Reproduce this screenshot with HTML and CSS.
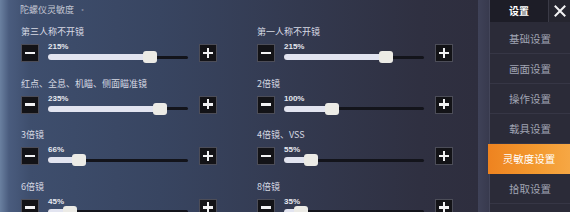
FILE: index.html
```html
<!DOCTYPE html>
<html lang="zh">
<head>
<meta charset="utf-8">
<link rel="stylesheet" href="styles.css">
</head>
<body>
<div class="screen">
  <main class="panel">
    <div class="title">陀螺仪灵敏度 <span class="dot">·</span></div>
    <div class="grid">
      <div class="setting">
        <div class="label">第三人称不开镜</div>
        <div class="controls">
          <div class="btn minus"></div>
          <div class="slider"><div class="pct">215%</div><div class="track"><div class="fill" style="width:73%"></div><div class="knob" style="left:73%"></div></div></div>
          <div class="btn plus"></div>
        </div>
      </div>
      <div class="setting">
        <div class="label">第一人称不开镜</div>
        <div class="controls">
          <div class="btn minus"></div>
          <div class="slider"><div class="pct">215%</div><div class="track"><div class="fill" style="width:73%"></div><div class="knob" style="left:73%"></div></div></div>
          <div class="btn plus"></div>
        </div>
      </div>
      <div class="setting">
        <div class="label">红点、全息、机瞄、侧面瞄准镜</div>
        <div class="controls">
          <div class="btn minus"></div>
          <div class="slider"><div class="pct">235%</div><div class="track"><div class="fill" style="width:80%"></div><div class="knob" style="left:80%"></div></div></div>
          <div class="btn plus"></div>
        </div>
      </div>
      <div class="setting">
        <div class="label">2倍镜</div>
        <div class="controls">
          <div class="btn minus"></div>
          <div class="slider"><div class="pct">100%</div><div class="track"><div class="fill" style="width:34%"></div><div class="knob" style="left:34%"></div></div></div>
          <div class="btn plus"></div>
        </div>
      </div>
      <div class="setting">
        <div class="label">3倍镜</div>
        <div class="controls">
          <div class="btn minus"></div>
          <div class="slider"><div class="pct">66%</div><div class="track"><div class="fill" style="width:22%"></div><div class="knob" style="left:22%"></div></div></div>
          <div class="btn plus"></div>
        </div>
      </div>
      <div class="setting">
        <div class="label">4倍镜、VSS</div>
        <div class="controls">
          <div class="btn minus"></div>
          <div class="slider"><div class="pct">55%</div><div class="track"><div class="fill" style="width:19%"></div><div class="knob" style="left:19%"></div></div></div>
          <div class="btn plus"></div>
        </div>
      </div>
      <div class="setting">
        <div class="label">6倍镜</div>
        <div class="controls">
          <div class="btn minus"></div>
          <div class="slider"><div class="pct">45%</div><div class="track"><div class="fill" style="width:16%"></div><div class="knob" style="left:16%"></div></div></div>
          <div class="btn plus"></div>
        </div>
      </div>
      <div class="setting">
        <div class="label">8倍镜</div>
        <div class="controls">
          <div class="btn minus"></div>
          <div class="slider"><div class="pct">35%</div><div class="track"><div class="fill" style="width:12%"></div><div class="knob" style="left:12%"></div></div></div>
          <div class="btn plus"></div>
        </div>
      </div>
    </div>
  </main>
  <div class="divider"></div>
  <aside class="sidebar">
    <div class="header">
      <div class="tab">设置</div>
      <div class="close"><svg width="12" height="12" viewBox="0 0 12 12"><path d="M1.5 1.5 L10.5 10.5 M10.5 1.5 L1.5 10.5" stroke="#f2f2f4" stroke-width="2" stroke-linecap="square"/></svg></div>
    </div>
    <nav class="menu">
      <div class="item">基础设置</div>
      <div class="item">画面设置</div>
      <div class="item">操作设置</div>
      <div class="item">载具设置</div>
      <div class="item active">灵敏度设置</div>
      <div class="item">拾取设置</div>
    </nav>
  </aside>
</div>
</body>
</html>
```
FILE: styles.css
```css
html, body {
  margin: 0;
  padding: 0;
}
body {
  width: 570px;
  height: 212px;
  overflow: hidden;
  font-family: "Noto Sans CJK SC", "Noto Sans", sans-serif;
  background: #2b2b38;
}
.screen {
  display: flex;
  height: 212px;
  overflow: hidden;
}
.panel {
  width: 478px;
  flex: none;
  box-sizing: border-box;
  padding: 4px 0 0 20px;
  background: linear-gradient(90deg, #6a80a0 0px, #4a5c7e 9px, #3e4e6d 30px, #384561 160px, #33394f 300px, #2f3041 420px, #2e2e3e 478px);
  overflow: hidden;
}
.title {
  font-size: 9px;
  line-height: 12px;
  color: #c3c7d3;
  margin-bottom: 10px;
}
.dot {
  color: #7d8498;
  margin-left: 2px;
}
.grid {
  display: grid;
  grid-template-columns: 196px 196px;
  column-gap: 40px;
  row-gap: 14.5px;
  padding-left: 1px;
}
.label {
  font-size: 9px;
  line-height: 12px;
  color: #d6d9e3;
  margin-bottom: 5px;
  white-space: nowrap;
}
.controls {
  display: flex;
  height: 20px;
}
.btn {
  width: 18px;
  height: 18px;
  flex: none;
  box-sizing: border-box;
  margin-top: 1px;
  background: #131317;
  border: 1px solid #4c4d58;
  position: relative;
}
.btn::before {
  content: "";
  position: absolute;
  left: 3px;
  top: 6.5px;
  width: 10px;
  height: 2.5px;
  background: #f2f2f4;
}
.plus::after {
  content: "";
  position: absolute;
  left: 6.75px;
  top: 2.75px;
  width: 2.5px;
  height: 10px;
  background: #f2f2f4;
}
.slider {
  width: 140px;
  flex: none;
  margin: 0 11px 0 9px;
}
.pct {
  font-family: "Liberation Sans", Arial, sans-serif;
  font-weight: bold;
  font-size: 8px;
  line-height: 8px;
  color: #e6e8ef;
}
.track {
  position: relative;
  height: 12px;
}
.track::before {
  content: "";
  position: absolute;
  left: 0;
  right: 0;
  top: 4.5px;
  height: 3px;
  background: #13141b;
  border-radius: 1.5px;
}
.fill {
  position: absolute;
  left: 0;
  top: 3px;
  height: 6px;
  background: #e2e4f0;
  border-radius: 3px 0 0 3px;
}
.knob {
  position: absolute;
  top: 0;
  width: 14px;
  height: 12px;
  margin-left: -7px;
  background: #ecebe6;
  border-radius: 3px;
}
.divider {
  width: 12px;
  flex: none;
  background: linear-gradient(90deg, #3f4258, #383a4e);
  border-right: 1px solid #44465a;
  box-sizing: border-box;
}
.sidebar {
  width: 80px;
  flex: none;
  background: #2b2b38;
}
.header {
  display: flex;
  height: 22px;
}
.tab {
  flex: 1;
  background: #1d1d27;
  color: #ffffff;
  font-size: 10px;
  font-weight: bold;
  line-height: 22px;
  text-align: center;
}
.close {
  width: 22px;
  flex: none;
  background: #25252f;
  border-left: 1px solid #3a3a46;
  box-sizing: border-box;
  display: flex;
  align-items: center;
  justify-content: center;
}
.menu {
  padding-top: 2px;
}
.item {
  height: 30px;
  line-height: 30px;
  box-sizing: border-box;
  border-bottom: 1px solid #363645;
  font-size: 10.5px;
  color: #a0a4b3;
  text-align: center;
}
.item.active {
  margin-left: -2px;
  color: #ffffff;
  border-bottom-color: transparent;
  background: linear-gradient(90deg, #ee8320, #f39a30 60%, #f6a744);
}
```
